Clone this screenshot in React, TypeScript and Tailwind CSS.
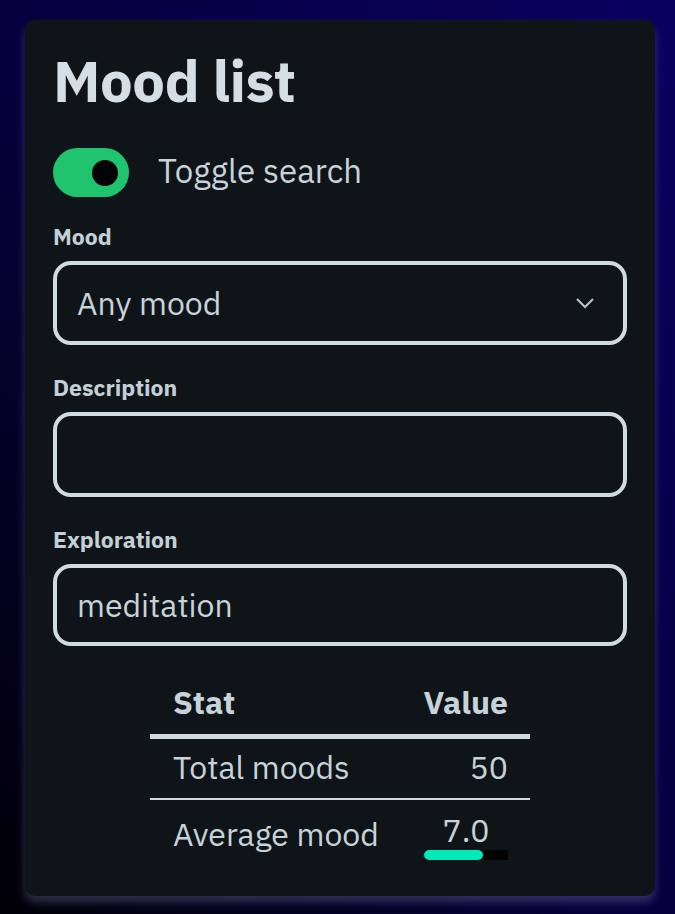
import { useState } from "react";

const font = { fontFamily: "'IBM Plex Sans', Inter, 'Noto Sans', sans-serif" };

function Field({ label, children }: { label: string; children: React.ReactNode }) {
  return (
    <div className="flex flex-col">
      <label className="text-[23px] font-bold leading-[26px] text-[#c3d0d7] mb-[12px]">{label}</label>
      {children}
    </div>
  );
}

export default function App() {
  const [searchOn, setSearchOn] = useState(true);
  const [exploration, setExploration] = useState("meditation");
  const [description, setDescription] = useState("");
  const average = 7.0;

  return (
    <div
      className="min-h-screen w-full bg-[linear-gradient(to_bottom_left,#08005f_0%,#05003a_55%,#020008_100%)] pl-[25px] pr-[20px] pt-[20px] pb-[19px]"
      style={font}
    >
      <div className="rounded-[10px] bg-[#0f1418] px-[28px] pt-[26px] pb-[28px] shadow-[0_6px_10px_rgba(170,170,230,0.28)]">
        <h1 className="text-[58px] font-bold leading-[70px] tracking-[-0.5px] text-[#d5dee4]">Mood list</h1>

        <div className="mt-[32px] flex items-center gap-[29px]">
          <button
            onClick={() => setSearchOn(!searchOn)}
            className={`flex h-[49px] w-[76px] items-center rounded-full px-[11px] ${
              searchOn ? "justify-end bg-[#20c46f]" : "justify-start bg-[#39424a]"
            }`}
          >
            <span className="size-[26px] rounded-full bg-[#030207]" />
          </button>
          <span className="-mt-[3px] text-[33px] leading-[40px] text-[#c6d3da]">Toggle search</span>
        </div>

        <div className="mt-[26px] flex flex-col gap-[29px]">
          <Field label="Mood">
            <div className="flex h-[84px] items-center justify-between rounded-[18px] border-[4px] border-[#cfdbe1] pl-[20px] pr-[28px]">
              <span className="text-[32px] text-[#c6d3da]">Any mood</span>
              <svg width="20" height="12" viewBox="0 0 20 12" fill="none">
                <path d="M2 2l8 8 8-8" stroke="#b9c6cd" strokeWidth="2" />
              </svg>
            </div>
          </Field>

          <Field label="Description">
            <input
              value={description}
              onChange={(e) => setDescription(e.target.value)}
              className="h-[85px] rounded-[18px] border-[4px] border-[#cfdbe1] bg-transparent px-[20px] text-[32px] text-[#c6d3da] outline-none"
            />
          </Field>

          <Field label="Exploration">
            <input
              value={exploration}
              onChange={(e) => setExploration(e.target.value)}
              className="h-[82px] rounded-[18px] border-[4px] border-[#cfdbe1] bg-transparent px-[20px] text-[32px] text-[#c6d3da] outline-none"
            />
          </Field>
        </div>

        <div className="mt-[36px] flex justify-center">
          <table className="w-[380px] border-collapse text-[#c6d3da]">
            <thead>
              <tr className="border-b-[5px] border-[#cfdbe1]">
                <th className="w-[250px] pl-[23px] pb-[12px] text-left text-[32px] font-bold leading-[40px]">Stat</th>
                <th className="pr-[22px] pb-[12px] text-right text-[32px] font-bold leading-[40px]">Value</th>
              </tr>
            </thead>
            <tbody>
              <tr className="border-b-[2px] border-[#cfdbe1]">
                <td className="pl-[23px] pt-[8px] pb-[11px] text-[32px] leading-[40px]">Total moods</td>
                <td className="pr-[22px] pt-[8px] pb-[11px] text-right text-[32px] leading-[40px]">50</td>
              </tr>
              <tr>
                <td className="pl-[23px] pt-[14px] pb-[8px] align-top text-[32px] leading-[40px]">Average mood</td>
                <td className="pr-[22px] pt-[12px] pb-[8px] text-right">
                  <div className="inline-flex flex-col items-center">
                    <span className="text-[32px] leading-[36px]">{average.toFixed(1)}</span>
                    <div className="mt-[2px] h-[10px] w-[84px] bg-[#030303]">
                      <div className="h-full rounded-full bg-[#00eab8]" style={{ width: `${(average / 10) * 100}%` }} />
                    </div>
                  </div>
                </td>
              </tr>
            </tbody>
          </table>
        </div>
      </div>
    </div>
  );
}
